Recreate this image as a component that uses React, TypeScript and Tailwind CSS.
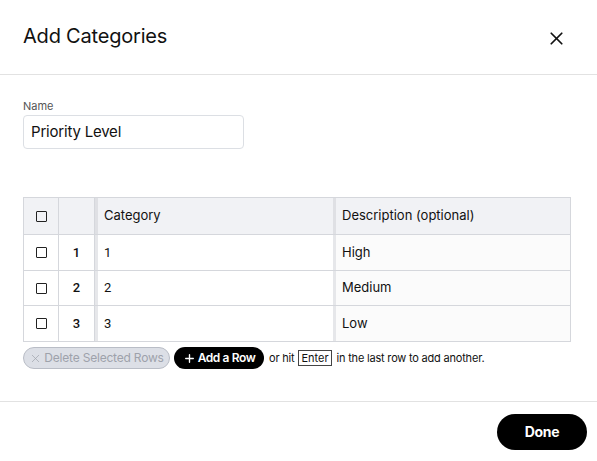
import { X, Plus } from "lucide-react";

const rows = [
  { n: 1, cat: "1", desc: "High" },
  { n: 2, cat: "2", desc: "Medium" },
  { n: 3, cat: "3", desc: "Low" },
];

const Box = () => <span className="inline-block w-[11px] h-[11px] border-[1.5px] border-[#222] rounded-[1px]" />;

export default function App() {
  return (
    <div className="w-[597px] h-[461px] bg-white text-[#111] font-['Inter',sans-serif] flex flex-col">
      <div className="h-[75px] border-b border-[#e2e2e2] flex items-center justify-between pl-[23px] pr-[30px] shrink-0">
        <h1 className="text-[20px] font-normal tracking-[-0.2px] -mt-[3px]">Add Categories</h1>
        <X size={21} strokeWidth={2} className="text-[#111] mt-[2px]" />
      </div>

      <div className="px-[23px] pt-[26px] flex-1">
        <div className="text-[11px] text-[#555] leading-none">Name</div>
        <div className="mt-[3px] w-[221px] h-[34px] border border-[#dcdfe4] rounded-[4px] flex items-center px-[7px] text-[15px] tracking-[-0.2px]">
          Priority Level
        </div>

        <div className="mt-[48px] w-[548px] border border-[#d5d7dc] text-[13px]">
          <div className="flex h-[37px] bg-[#f1f2f5] border-b border-[#d5d7dc]">
            <div className="w-[35px] flex items-center justify-center border-r border-[#d5d7dc]"><Box /></div>
            <div className="w-[36px] border-r border-[#d5d7dc]" />
            <div className="w-[238px] flex items-center pl-[6px] border-l-[3px] border-[#dfe0e4]">Category</div>
            <div className="flex-1 flex items-center pl-[6px] border-l-[3px] border-[#dfe0e4]">Description (optional)</div>
          </div>
          {rows.map((r, i) => (
            <div key={r.n} className={`flex ${i === 0 ? "h-[36px]" : "h-[35px]"} ${i < rows.length - 1 ? "border-b border-[#d5d7dc]" : ""}`}>
              <div className="w-[35px] flex items-center justify-center border-r border-[#d5d7dc]"><Box /></div>
              <div className="w-[36px] flex items-center justify-center border-r border-[#d5d7dc] font-['Roboto',sans-serif] font-medium text-[13px]">{r.n}</div>
              <div className="w-[238px] flex items-center pl-[6px] border-l-[3px] border-[#e6e7ea] font-['Roboto',sans-serif] text-[13px]">{r.cat}</div>
              <div className="flex-1 flex items-center pl-[6px] border-l-[3px] border-[#e6e7ea] bg-[#fbfbfb]">{r.desc}</div>
            </div>
          ))}
        </div>

        <div className="mt-[5px] flex items-center text-[11px]">
          <div className="h-[22px] w-[147px] rounded-full bg-[#dcdfe6] border border-[#b9bdc6] text-[#9ea2ab] flex items-center justify-center gap-[2px] text-[12px] tracking-[-0.2px]">
            <X size={13} strokeWidth={1.3} />
            Delete Selected Rows
          </div>
          <div className="ml-[4px] h-[22px] w-[90px] rounded-full bg-black text-white flex items-center justify-center gap-[2px] text-[12px] font-semibold tracking-[-0.4px]">
            <Plus size={13} strokeWidth={2.5} />
            Add a Row
          </div>
          <span className="ml-[5px] tracking-[-0.2px]">or hit</span>
          <span className="ml-[4px] border border-[#444] px-[2px] leading-[14px]">Enter</span>
          <span className="ml-[5px] tracking-[-0.2px]">in the last row to add another.</span>
        </div>
      </div>

      <div className="h-[60px] border-t border-[#e2e2e2] flex items-center justify-end pr-[10px] shrink-0">
        <div className="w-[90px] h-[36px] rounded-full bg-black text-white flex items-center justify-center text-[14px] font-bold tracking-[-0.3px]">
          Done
        </div>
      </div>
    </div>
  );
}
